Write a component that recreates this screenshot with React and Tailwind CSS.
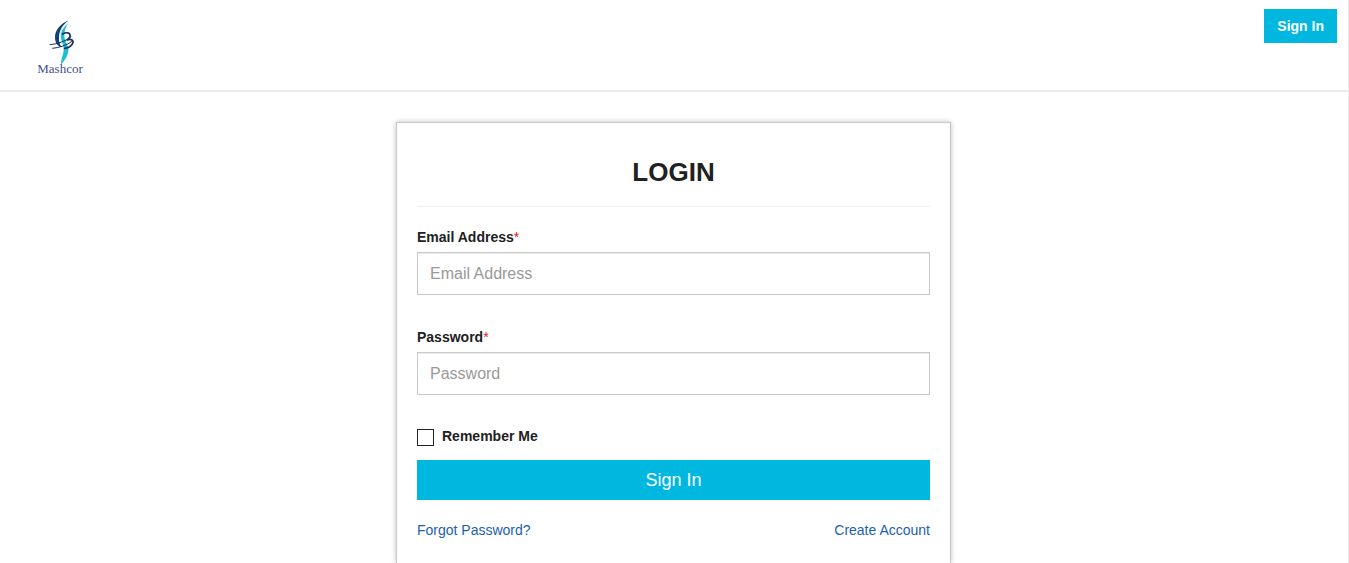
function Logo() {
  return (
    <a href="#home" className="flex w-[60px] flex-col items-center text-[#40508f]">
      <svg viewBox="48 14 84 144" className="h-12 w-7" aria-hidden="true">
        <path d="M115 36 C97 50 88 68 94 86 C99 99 104 110 99 128 C95 140 93 150 93 160 C107 144 117 128 115 110 C112 96 103 88 103 72 C103 58 107 47 115 36Z" fill="#1fbcd6" />
        <path d="M116 27 C92 37 75 56 75 78 C75 94 82 104 95 108 C89 98 86 90 87 76 C88 56 99 40 116 27Z" fill="#17407a" />
        <path d="M59 100 C82 98 106 90 124 76" fill="none" stroke="#152f5e" strokeWidth="3" />
        <path d="M67 111 C88 109 110 102 126 90" fill="none" stroke="#152f5e" strokeWidth="3" />
        <path d="M98 68 C112 60 124 66 119 77 C117 81 114 84 110 87 C124 80 133 88 127 98 C122 106 113 110 104 111" fill="none" stroke="#152f5e" strokeWidth="5" strokeLinecap="round" />
      </svg>
      <span className="font-['Liberation_Serif',serif] text-[13px] leading-[10px]">Mashcor</span>
    </a>
  );
}

function Field({ id, label, type, autoComplete }) {
  return (
    <div className="flex flex-col gap-[5px]">
      <label htmlFor={id} className="text-sm font-bold">
        {label}
        <span className="font-normal text-[#e8101c]">*</span>
      </label>
      <input
        id={id}
        type={type}
        placeholder={label}
        autoComplete={autoComplete}
        className="h-[43px] w-full border border-[#c8c8c8] bg-white px-3 text-base shadow-[inset_0_1px_1px_rgba(0,0,0,0.08)] placeholder:text-[#999999]"
      />
    </div>
  );
}

export default function App() {
  return (
    <div className="flex min-h-screen flex-col border-r border-[#ececec] bg-white font-['Liberation_Sans',Arial,sans-serif] text-[#212121]">
      <header className="flex h-[92px] items-start justify-between border-b-2 border-[#ececec] pr-[11px] pl-[30px]">
        <div className="pt-4">
          <Logo />
        </div>
        <a href="#login" className="mt-[9px] flex h-[34px] items-center bg-[#00b8df] px-[13px] text-sm font-bold text-white">
          Sign In
        </a>
      </header>

      <main className="flex flex-1 justify-center pt-[30px] pr-px">
        <form id="login" className="w-full max-w-[555px] border border-b-0 border-[#c8c8c8] px-5 pb-5 shadow-[0_0_5px_rgba(0,0,0,0.25)]">
          <h1 className="border-b border-[#eeeeee] pt-[33px] pb-[18px] text-center text-[26px] leading-8 font-bold">LOGIN</h1>
          <div className="flex flex-col gap-8 pt-5">
            <Field id="email" label="Email Address" type="email" autoComplete="email" />
            <Field id="password" label="Password" type="password" autoComplete="current-password" />
          </div>
          <div className="flex items-end gap-2 pt-[31px]">
            <input
              id="remember"
              type="checkbox"
              className="size-[17px] appearance-none border border-[#222222] bg-white checked:bg-[#00b8df]"
            />
            <label htmlFor="remember" className="text-sm font-bold">Remember Me</label>
          </div>
          <button type="submit" className="mt-[14px] h-10 w-full bg-[#00b8df] text-lg text-white">
            Sign In
          </button>
          <div className="flex justify-between pt-5 text-sm text-[#1b5fae]">
            <a href="#forgot">Forgot Password?</a>
            <a href="#create">Create Account</a>
          </div>
        </form>
      </main>
    </div>
  );
}
